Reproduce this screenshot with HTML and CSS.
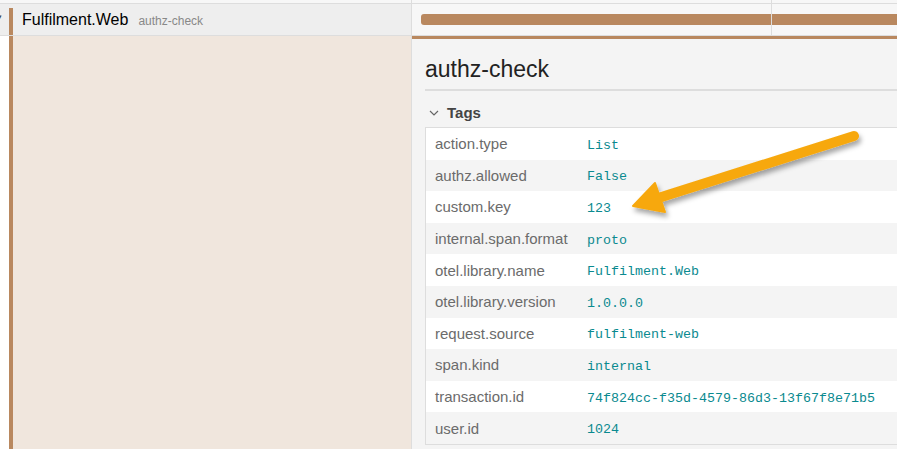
FILE: index.html
```html
<!DOCTYPE html>
<html>
<head>
<meta charset="utf-8">
<link rel="stylesheet" href="styles.css">
</head>
<body>
<div class="page">
  <div class="prev-row">
    <div class="prev-left"></div>
    <div class="prev-right"><div class="tick"></div></div>
  </div>
  <div class="span-row">
    <div class="name-cell">
      <span class="caret">▾</span>
      <span class="span-bar"></span>
      <span class="svc">Fulfilment.Web</span>
      <span class="op">authz-check</span>
    </div>
    <div class="timeline-cell">
      <div class="tick"></div>
      <div class="bar"></div>
    </div>
  </div>
  <div class="detail-row">
    <div class="detail-left">
      <span class="gap"></span>
      <span class="span-bar"></span>
      <span class="beige"></span>
    </div>
    <div class="detail-right">
      <h2 class="title">authz-check</h2>
      <div class="tags-head">
        <svg class="chev" width="10" height="8" viewBox="0 0 10 8"><polyline points="1,2 5,6 9,2" fill="none" stroke="#666" stroke-width="1.2"/></svg>
        <span>Tags</span>
      </div>
      <div class="tags">
        <div class="tr"><span class="k">action.type</span><span class="v">List</span></div>
        <div class="tr"><span class="k">authz.allowed</span><span class="v">False</span></div>
        <div class="tr"><span class="k">custom.key</span><span class="v">123</span></div>
        <div class="tr"><span class="k">internal.span.format</span><span class="v">proto</span></div>
        <div class="tr"><span class="k">otel.library.name</span><span class="v">Fulfilment.Web</span></div>
        <div class="tr"><span class="k">otel.library.version</span><span class="v">1.0.0.0</span></div>
        <div class="tr"><span class="k">request.source</span><span class="v">fulfilment-web</span></div>
        <div class="tr"><span class="k">span.kind</span><span class="v">internal</span></div>
        <div class="tr"><span class="k">transaction.id</span><span class="v">74f824cc-f35d-4579-86d3-13f67f8e71b5</span></div>
        <div class="tr"><span class="k">user.id</span><span class="v">1024</span></div>
      </div>
    </div>
  </div>
  <svg class="arrow" width="897" height="449" viewBox="0 0 897 449">
    <defs>
      <filter id="sh" x="-20%" y="-20%" width="140%" height="160%">
        <feDropShadow dx="2" dy="4" stdDeviation="2.5" flood-color="#000" flood-opacity="0.35"/>
      </filter>
    </defs>
    <g filter="url(#sh)" fill="#f7a80b" stroke="#f7a80b">
      <line x1="854" y1="136" x2="652" y2="200" stroke-width="10" stroke-linecap="round"/>
      <polygon points="633,206 655,183 665,212" stroke-width="2" stroke-linejoin="round"/>
    </g>
  </svg>
</div>
</body>
</html>
```
FILE: styles.css
```css
* { box-sizing: border-box; }
html, body { margin: 0; padding: 0; }
body {
  width: 897px;
  height: 449px;
  overflow: hidden;
  background: #fff;
  font-family: "Liberation Sans", Arial, sans-serif;
}
.page {
  position: relative;
  width: 897px;
  height: 449px;
  overflow: hidden;
}
.prev-row {
  display: flex;
  height: 4px;
  border-bottom: 1px solid #ddd;
}
.prev-left {
  width: 412px;
  flex-shrink: 0;
  background: #f7f7f7;
  border-right: 1px solid #ddd;
}
.prev-right {
  flex: 1;
  min-width: 0;
  background: #f7f7f7;
  position: relative;
}
.tick {
  position: absolute;
  left: 359px;
  top: 0;
  bottom: 0;
  width: 1px;
  background: #ddd;
}
.span-row {
  display: flex;
  height: 32px;
  border-bottom: 1px solid #ddd;
}
.name-cell {
  width: 412px;
  flex-shrink: 0;
  background: #eee;
  border-right: 1px solid #ddd;
  display: flex;
  align-items: center;
  position: relative;
}
.caret {
  position: absolute;
  left: -2px;
  top: 9px;
  font-size: 7px;
  color: #444;
  width: 4px;
  overflow: hidden;
}
.name-cell .span-bar {
  margin-left: 9px;
  width: 4px;
  align-self: stretch;
  margin-top: 4px;
}
.span-bar {
  background: #b9885f;
  display: block;
}
.svc {
  margin-left: 9px;
  font-size: 16px;
  color: #000;
}
.op {
  margin-left: 10px;
  font-size: 12px;
  color: #888;
  margin-top: 2px;
}
.timeline-cell {
  flex: 1;
  min-width: 0;
  background: #f7f7f7;
  position: relative;
  padding-top: 10px;
  padding-left: 9px;
}
.bar {
  height: 11px;
  background: #b9885f;
  border-radius: 3px 0 0 3px;
}
.detail-row {
  display: flex;
  height: 413px;
}
.detail-left {
  width: 412px;
  flex-shrink: 0;
  display: flex;
  border-right: 1px solid #ddd;
}
.detail-left .gap { width: 9px; background: #fff; }
.detail-left .span-bar { width: 4px; }
.detail-left .beige { flex: 1; background: #f0e6dd; }
.detail-right {
  flex: 1;
  min-width: 0;
  overflow: hidden;
  background: #f4f4f4;
  border-top: 3px solid #b9885f;
  padding: 0 0 0 13px;
}
.title {
  margin: 0;
  font-weight: normal;
  font-size: 23px;
  color: #222;
  padding-top: 17px;
  height: 52px;
  line-height: 26px;
  border-bottom: 2px solid #ddd;
}
.tags-head {
  display: flex;
  align-items: center;
  height: 36px;
  padding-left: 4px;
  padding-top: 7px;
}
.chev { margin-right: 8px; }
.tags-head span {
  font-size: 15px;
  font-weight: bold;
  color: #444;
}
.tags {
  border: 1px solid #ddd;
  border-right: none;
  width: 480px;
}
.tr {
  display: flex;
  align-items: center;
  height: 31.6px;
  background: #fff;
}
.tr:nth-child(even) { background: #f4f4f4; }
.k {
  width: 161px;
  flex-shrink: 0;
  padding-left: 9px;
  font-size: 15px;
  color: #6b6b6b;
  white-space: nowrap;
}
.v {
  font-family: "Liberation Mono", "Courier New", monospace;
  font-size: 13.33px;
  color: #0a8a8f;
  white-space: nowrap;
  margin-top: 3px;
}
.arrow {
  position: absolute;
  left: 0;
  top: 0;
  pointer-events: none;
}
```
